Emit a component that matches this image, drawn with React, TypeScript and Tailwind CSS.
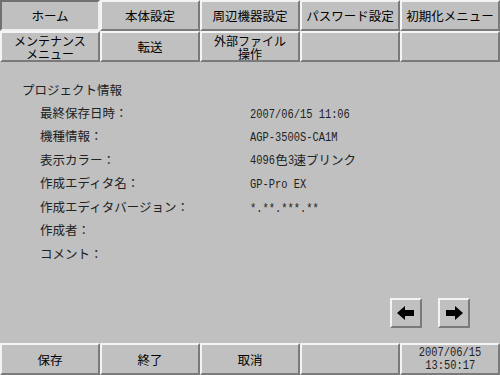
import React from 'react'

const jp = "font-['MS_UI_Gothic','Noto_Sans_CJK_JP',sans-serif]"
const mono = "font-['Liberation_Mono',monospace]"

function Btn({ children, pressed = false, className = '' }: { children?: React.ReactNode; pressed?: boolean; className?: string }) {
  return (
    <div
      className={
        'flex items-center justify-center text-center leading-[13px] text-[12.5px] text-black border-2 ' +
        (pressed
          ? 'border-t-[#707070] border-l-[#707070] border-b-[#f0f0f0] border-r-[#f0f0f0] '
          : 'border-t-[#f4f4f4] border-l-[#f4f4f4] border-b-[#7a7a7a] border-r-[#7a7a7a] ') +
        className
      }
    >
      {children}
    </div>
  )
}

function Mono({ children, center = false }: { children: React.ReactNode; center?: boolean }) {
  return (
    <span
      className={`${mono} inline-block ${center ? 'origin-center' : 'origin-left'} scale-x-[0.8] text-[13px] leading-[13px] text-[#222]`}
    >
      {children}
    </span>
  )
}

const rows: [string, string][] = [
  ['最終保存日時：', '2007/06/15 11:06'],
  ['機種情報：', 'AGP-3500S-CA1M'],
  ['表示カラー：', '4096色3速ブリンク'],
  ['作成エディタ名：', 'GP-Pro EX'],
  ['作成エディタバージョン：', '*.**.***.**'],
  ['作成者：', ''],
  ['コメント：', ''],
]

export default function App() {
  return (
    <div className={`${jp} w-[500px] h-[375px] bg-[#c0c0c0] flex flex-col overflow-hidden`}>
      <div className="grid grid-cols-5 grid-rows-[31px_31px]">
        <Btn pressed>ホーム</Btn>
        <Btn>本体設定</Btn>
        <Btn>周辺機器設定</Btn>
        <Btn>パスワード設定</Btn>
        <Btn>初期化メニュー</Btn>
        <Btn className="text-[12px] leading-[13px]">メンテナンス<br />メニュー</Btn>
        <Btn>転送</Btn>
        <Btn className="text-[12px] leading-[13px]">外部ファイル<br />操作</Btn>
        <Btn />
        <Btn />
      </div>

      <div className="flex-1 flex flex-col pt-[16px] text-[12.5px] text-[#222]">
        <div className="pl-[22px] h-[23.5px] leading-[23.5px]">プロジェクト情報</div>
        {rows.map(([label, value]) => (
          <div key={label} className="flex h-[23.5px] items-center">
            <div className="pl-[40px] w-[250px]">{label}</div>
            <div>
              {value.startsWith('4096') ? (
                <span className="inline-flex items-center">
                  <Mono>4096</Mono>
                  <span className="-ml-[6px]">色</span>
                  <Mono>3</Mono>
                  <span className="-ml-[2px]">速ブリンク</span>
                </span>
              ) : (
                <Mono>{value}</Mono>
              )}
            </div>
          </div>
        ))}

        <div className="mt-auto mb-[15px] mr-[30px] flex justify-end gap-[16px]">
          <Btn className="w-[32px] h-[30px]">
            <svg width="18" height="14" viewBox="0 0 18 14">
              <polygon points="0,7 8,0 8,4 17,4 17,10 8,10 8,14" fill="#000" />
            </svg>
          </Btn>
          <Btn className="w-[32px] h-[30px]">
            <svg width="18" height="14" viewBox="0 0 18 14">
              <polygon points="18,7 10,0 10,4 1,4 1,10 10,10 10,14" fill="#000" />
            </svg>
          </Btn>
        </div>
      </div>

      <div className="grid grid-cols-5 h-[32px]">
        <Btn>保存</Btn>
        <Btn>終了</Btn>
        <Btn>取消</Btn>
        <Btn />
        <Btn className="flex-col">
          <Mono center>2007/06/15</Mono>
          <Mono center>13:50:17</Mono>
        </Btn>
      </div>
    </div>
  )
}
